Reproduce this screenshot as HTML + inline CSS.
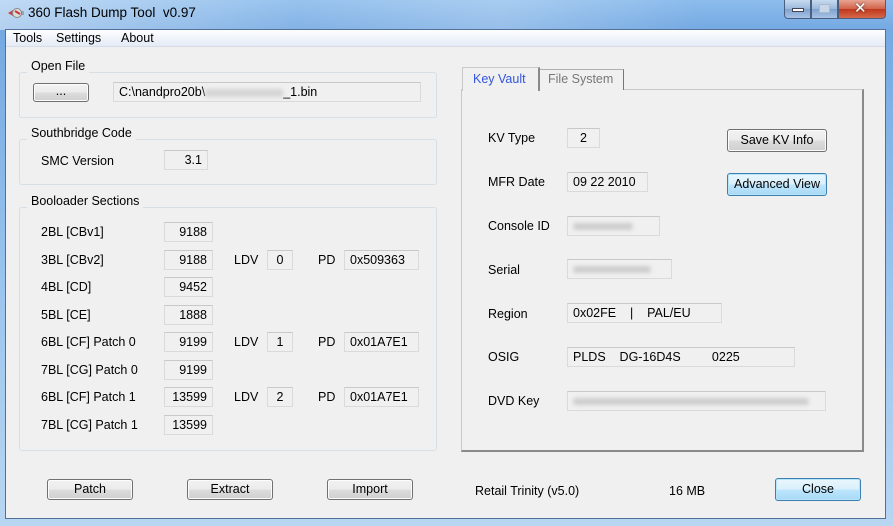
<!DOCTYPE html>
<html><head><style>
*{margin:0;padding:0;box-sizing:border-box}
body{width:893px;height:526px;overflow:hidden;font-family:"Liberation Sans","DejaVu Sans",sans-serif;font-size:12px;color:#000;background:#7fb2e6;position:relative}
.a{position:absolute}
.frame{left:0;top:0;width:893px;height:526px;background:linear-gradient(180deg,#8cbcec 0,#74a9e2 30px,#9cc6ee 300px,#b8d6f2 526px)}
.title{left:0;top:0;width:893px;height:30px;background:linear-gradient(90deg,rgba(255,255,255,.45) 0,rgba(255,255,255,.1) 300px,rgba(255,255,255,.25) 500px,rgba(255,255,255,0) 700px)}
.client{left:5px;top:29px;width:881px;height:490px;background:#f0f0f0;border:1px solid #54709a}
.menu{left:6px;top:30px;width:879px;height:17px;background:linear-gradient(#fdfeff,#e4ebf6);border-bottom:1px solid #d6dde8}
.menu span{position:absolute;top:1px;font-size:12.5px}
.grp{border:1px solid #d5dfe5;border-radius:3px}
.gl{background:#f0f0f0;padding:0 4px;font-size:12.5px}
.tb{background:#f0f0f0;border:1px solid #dadada;border-top-color:#c8c8c8;height:20px;line-height:18px;padding:0 5px;font-size:12.5px}
.r{text-align:right}
.c{text-align:center}
.lab{font-size:12.5px}
.btn{border:1px solid #707070;border-radius:3px;background:linear-gradient(#f2f2f2 0,#ebebeb 50%,#dddddd 51%,#cfcfcf 100%);text-align:center;font-size:12.5px;box-shadow:inset 0 0 0 1px #fcfcfc}
.btnb{border:1px solid #3c7fb1;box-shadow:inset 0 0 0 1px #b8e4fa;background:linear-gradient(#eaf6fd 0,#d9f0fc 50%,#bee6fd 51%,#a7d9f5 100%)}
.blur{background:#b0b0b0;filter:blur(2px);height:7px;opacity:.55;border-radius:3px}
.wb{top:0;height:19px;border:1px solid #4a5f7f;border-top:none}
</style></head><body>
<div class="a frame"></div>
<div class="a title"></div>
<svg class="a" style="left:7px;top:6px" width="18" height="14" viewBox="0 0 18 14"><path d="M1 7 L6 4 L6 10 Z" fill="#c44"/><circle cx="10" cy="7" r="4.5" fill="#ddd" stroke="#888"/><path d="M8 5 L13 8" stroke="#c33" stroke-width="2"/><path d="M14 6 H17 M14 8 H17" stroke="#777"/></svg>
<div class="a" style="left:28px;top:5px;font-size:13.5px">360 Flash Dump Tool&nbsp; v0.97</div>
<div class="a wb" style="left:784px;width:27px;border-radius:0 0 0 4px;background:linear-gradient(#c8daee,#9bb8dc 50%,#7fa2cf 51%,#a8c3e6)"></div>
<div class="a" style="left:792px;top:8px;width:12px;height:4px;background:#fff;border:1px solid #445"></div>
<div class="a wb" style="left:811px;width:27px;background:linear-gradient(#c8daee,#9bb8dc 50%,#7fa2cf 51%,#a8c3e6)"></div>
<div class="a" style="left:819px;top:4px;width:11px;height:9px;border:1px solid #aabbd0;background:#c8d6e8"></div>
<div class="a wb" style="left:838px;width:48px;border-radius:0 0 4px 0;background:linear-gradient(#e8a493,#d0624a 50%,#c0361c 51%,#d56a48)"></div>
<div class="a" style="left:854px;top:-1px;color:#fff;font-weight:bold;font-size:15px;text-shadow:0 0 2px #333">✕</div>

<div class="a client"></div>
<div class="a menu"><span style="left:7px">Tools</span><span style="left:50px">Settings</span><span style="left:115px">About</span></div>

<div class="a grp" style="left:19px;top:72px;width:418px;height:46px"></div>
<div class="a gl" style="left:27px;top:59px">Open File</div>
<div class="a btn" style="left:33px;top:83px;width:56px;height:19px;line-height:15px">...</div>
<div class="a tb" style="left:113px;top:82px;width:308px">C:\nandpro20b\<span style="display:inline-block;width:78px;height:8px;background:#d4d4d4;filter:blur(2px);vertical-align:middle"></span>_1.bin</div>

<div class="a grp" style="left:19px;top:139px;width:418px;height:46px"></div>
<div class="a gl" style="left:27px;top:126px">Southbridge Code</div>
<div class="a lab" style="left:41px;top:154px">SMC Version</div>
<div class="a tb r" style="left:164px;top:150px;width:44px">3.1</div>

<div class="a grp" style="left:19px;top:207px;width:418px;height:244px"></div>
<div class="a gl" style="left:27px;top:194px">Booloader Sections</div>

<div class="a lab" style="left:41px;top:225px">2BL [CBv1]</div>
<div class="a tb r" style="left:164px;top:222px;width:49px">9188</div>
<div class="a lab" style="left:41px;top:253px">3BL [CBv2]</div>
<div class="a tb r" style="left:164px;top:250px;width:49px">9188</div>
<div class="a lab" style="left:234px;top:253px">LDV</div>
<div class="a tb c" style="left:267px;top:250px;width:26px">0</div>
<div class="a lab" style="left:318px;top:253px">PD</div>
<div class="a tb" style="left:344px;top:250px;width:75px">0x509363</div>
<div class="a lab" style="left:41px;top:280px">4BL [CD]</div>
<div class="a tb r" style="left:164px;top:277px;width:49px">9452</div>
<div class="a lab" style="left:41px;top:308px">5BL [CE]</div>
<div class="a tb r" style="left:164px;top:305px;width:49px">1888</div>
<div class="a lab" style="left:41px;top:335px">6BL [CF] Patch 0</div>
<div class="a tb r" style="left:164px;top:332px;width:49px">9199</div>
<div class="a lab" style="left:234px;top:335px">LDV</div>
<div class="a tb c" style="left:267px;top:332px;width:26px">1</div>
<div class="a lab" style="left:318px;top:335px">PD</div>
<div class="a tb" style="left:344px;top:332px;width:75px">0x01A7E1</div>
<div class="a lab" style="left:41px;top:363px">7BL [CG] Patch 0</div>
<div class="a tb r" style="left:164px;top:360px;width:49px">9199</div>
<div class="a lab" style="left:41px;top:390px">6BL [CF] Patch 1</div>
<div class="a tb r" style="left:164px;top:387px;width:49px">13599</div>
<div class="a lab" style="left:234px;top:390px">LDV</div>
<div class="a tb c" style="left:267px;top:387px;width:26px">2</div>
<div class="a lab" style="left:318px;top:390px">PD</div>
<div class="a tb" style="left:344px;top:387px;width:75px">0x01A7E1</div>
<div class="a lab" style="left:41px;top:418px">7BL [CG] Patch 1</div>
<div class="a tb r" style="left:164px;top:415px;width:49px">13599</div>

<div class="a" style="left:461px;top:89px;width:403px;height:363px;border:1px solid #c8c8c8;border-right:2px solid #8a8a8a;border-bottom:2px solid #8a8a8a;background:#f0f0f0"></div>
<div class="a" style="left:539px;top:69px;width:85px;height:21px;border:1px solid #b0b0b0;border-bottom:none;border-right-color:#777;color:#777;font-size:12.5px;padding:2px 0 0 8px;background:#f0f0f0">File System</div>
<div class="a" style="left:462px;top:67px;width:78px;height:24px;border:1px solid #c8c8c8;border-right:2px solid #8a8a8a;border-bottom:none;background:#f0f0f0;color:#3355dd;font-size:12.5px;padding:4px 0 0 10px">Key Vault</div>

<div class="a lab" style="left:488px;top:131px">KV Type</div>
<div class="a tb c" style="left:567px;top:128px;width:33px">2</div>
<div class="a lab" style="left:488px;top:175px">MFR Date</div>
<div class="a tb" style="left:567px;top:172px;width:81px">09 22 2010</div>
<div class="a lab" style="left:488px;top:219px">Console ID</div>
<div class="a tb" style="left:567px;top:216px;width:93px;padding-top:6px"><div class="blur" style="width:60px"></div></div>
<div class="a lab" style="left:488px;top:263px">Serial</div>
<div class="a tb" style="left:567px;top:259px;width:105px;padding-top:6px"><div class="blur" style="width:78px"></div></div>
<div class="a lab" style="left:488px;top:307px">Region</div>
<div class="a tb" style="left:567px;top:303px;width:155px">0x02FE&nbsp;&nbsp;&nbsp; |&nbsp;&nbsp;&nbsp; PAL/EU</div>
<div class="a lab" style="left:488px;top:350px">OSIG</div>
<div class="a tb" style="left:567px;top:347px;width:228px">PLDS&nbsp;&nbsp;&nbsp; DG-16D4S&nbsp;&nbsp;&nbsp;&nbsp;&nbsp;&nbsp;&nbsp;&nbsp; 0225</div>
<div class="a lab" style="left:488px;top:394px">DVD Key</div>
<div class="a tb" style="left:567px;top:391px;width:259px;padding-top:6px"><div class="blur" style="width:236px"></div></div>

<div class="a btn" style="left:727px;top:129px;width:100px;height:23px;line-height:21px">Save KV Info</div>
<div class="a btn btnb" style="left:727px;top:173px;width:100px;height:23px;line-height:21px">Advanced View</div>

<div class="a btn" style="left:47px;top:479px;width:86px;height:21px;line-height:19px">Patch</div>
<div class="a btn" style="left:187px;top:479px;width:86px;height:21px;line-height:19px">Extract</div>
<div class="a btn" style="left:327px;top:479px;width:86px;height:21px;line-height:19px">Import</div>
<div class="a lab" style="left:475px;top:484px">Retail Trinity (v5.0)</div>
<div class="a lab" style="left:669px;top:484px">16 MB</div>
<div class="a btn btnb" style="left:775px;top:478px;width:86px;height:23px;line-height:21px">Close</div>
</body></html>
